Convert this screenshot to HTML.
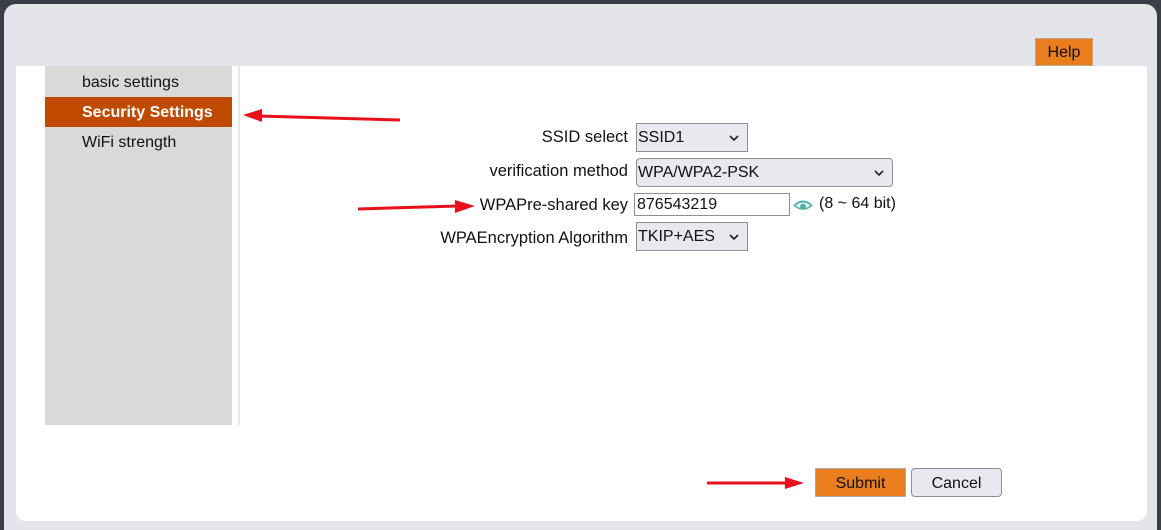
<!DOCTYPE html>
<html><head><style>
*{margin:0;padding:0;box-sizing:border-box}
body{width:1161px;height:530px;background:#3b3e47;font-family:"Liberation Sans","DejaVu Sans",sans-serif;position:relative;overflow:hidden;font-size:16px;color:#111}
.panel{position:absolute;left:4px;top:4px;width:1153px;height:526px;background:#e4e5ea;border-radius:12px 12px 0 0}
.white{position:absolute;left:16px;top:66px;width:1131px;height:455px;background:#fff;border-radius:0 0 10px 10px}
.side{position:absolute;left:45px;top:66px;width:187px;height:359px;background:#d9d9d9}
.item{position:absolute;left:0;width:187px;height:30px;line-height:32px;padding-left:37px;font-size:16px}
.vline{position:absolute;left:238px;top:66px;width:2px;height:359px;background:#e8e8e8}
.help{position:absolute;left:1035px;top:38px;width:58px;height:28px;background:#ea7d1e;border:1px solid #b9a38e;text-align:center;line-height:27px;font-size:16px}
.lab{position:absolute;right:533px;font-size:16.5px;text-align:right;white-space:nowrap}
.sel{position:absolute;left:636px;height:29px;background:#e8e9ee;border:1px solid #8d8f96;padding-left:1px;line-height:28px;font-size:16px}
.sel svg{position:absolute;right:8px;top:11px}
.btn{position:absolute;top:468px;height:29px;text-align:center;line-height:29px;font-size:16px}
</style></head><body>
<div class="panel"></div>
<div class="white"></div>
<div class="help">Help</div>
<div class="side">
<div class="item" style="top:1px">basic settings</div>
<div class="item" style="top:31px;background:#bf4a00;color:#fff;font-weight:bold">Security Settings</div>
<div class="item" style="top:61px">WiFi strength</div>
</div>
<div class="vline"></div>

<div class="lab" style="top:128px">SSID select</div>
<div class="sel" style="top:123px;width:112px">SSID1<svg width="10" height="7"><path d="M1 1 L5 5 L9 1" fill="none" stroke="#222" stroke-width="1.6"/></svg></div>
<div class="lab" style="top:162px">verification method</div>
<div class="sel" style="top:158px;width:257px;border-radius:4px">WPA/WPA2-PSK<svg width="10" height="7"><path d="M1 1 L5 5 L9 1" fill="none" stroke="#222" stroke-width="1.6"/></svg></div>
<div class="lab" style="top:196px">WPAPre-shared key</div>
<div style="position:absolute;left:634px;top:193px;width:156px;height:23px;border:1px solid #8d8f96;background:#fff;padding-left:2px;line-height:22px;font-size:16px">876543219</div>
<svg style="position:absolute;left:793px;top:196px" width="20" height="18" viewBox="0 0 20 18"><path d="M1 10 Q10 1 19 10" fill="none" stroke="#4fb0a8" stroke-width="2"/><path d="M2 10 Q10 16 18 10" fill="none" stroke="#4fb0a8" stroke-width="1.5"/><circle cx="10" cy="10.5" r="3" fill="#4fb0a8"/></svg>
<div style="position:absolute;left:819px;top:195px;font-size:16px">(8 ~ 64 bit)</div>
<div class="lab" style="top:229px">WPAEncryption Algorithm</div>
<div class="sel" style="top:222px;width:112px">TKIP+AES<svg width="10" height="7"><path d="M1 1 L5 5 L9 1" fill="none" stroke="#222" stroke-width="1.6"/></svg></div>

<div class="btn" style="left:815px;width:91px;background:#ea7d1e;border:1px solid #aaa">Submit</div>
<div class="btn" style="left:911px;width:91px;background:#e8e9ee;border:1px solid #8d8f96;border-radius:4px">Cancel</div>

<svg style="position:absolute;left:0;top:0" width="1161" height="530">
<g fill="#e8101a" stroke="#e8101a">
<line x1="400" y1="120" x2="258" y2="116" stroke-width="3"/><polygon points="243,115 262,109 262,122" stroke="none"/>
<line x1="358" y1="209" x2="458" y2="206" stroke-width="3"/><polygon points="475,206 455,200 455,213" stroke="none"/>
<line x1="707" y1="483" x2="788" y2="483" stroke-width="3"/><polygon points="804,483 785,477 785,489" stroke="none"/>
</g></svg>
</body></html>
